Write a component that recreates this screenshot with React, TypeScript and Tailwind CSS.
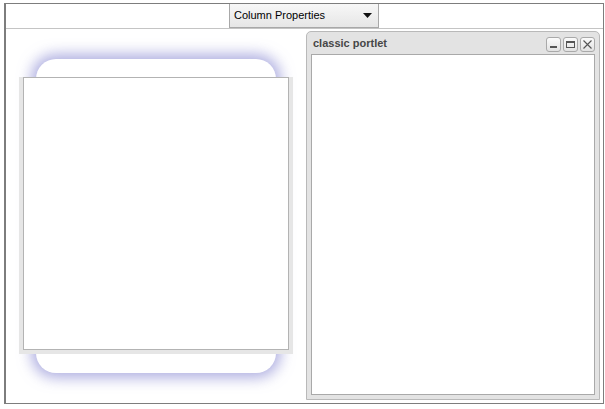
import React from 'react';

function PortletButton({ children }: { children: React.ReactNode }) {
    return (
        <div className="w-[15px] h-[15px] rounded-[3px] border border-[#a9a9a9] bg-gradient-to-b from-[#fbfbfb] to-[#e2e2e2] flex items-center justify-center">
            {children}
        </div>
    );
}

export default function App() {
    return (
        <div className="w-[605px] h-[409px] bg-white pt-[3px] pl-[4px]" style={{ fontFamily: '"Liberation Sans", Arial, sans-serif' }}>
            {/* cadre principal */}
            <div className="w-[600px] h-[401px] border border-l-2 border-[#7d7d7d] flex flex-col">
                {/* barre d'outils */}
                <div className="h-[25px] border-b border-[#c4c4c4] flex justify-center shrink-0">
                    <div className="w-[150px] h-[24px] border border-t-0 border-[#a8a8a8] bg-gradient-to-b from-[#f7f7f7] to-[#e6e6e6] flex items-center justify-between pl-[4px] pr-[6px] mr-[1px]">
                        <span className="text-[11px] text-black">Column Properties</span>
                        <svg width="9" height="5" viewBox="0 0 9 5">
                            <path d="M0 0h9L4.5 5z" fill="#111" />
                        </svg>
                    </div>
                </div>

                {/* colonnes */}
                <div className="flex-1 flex">
                    {/* colonne gauche: zone de dépôt */}
                    <div className="w-[300px] grid place-items-center">
                        <div className="col-start-1 row-start-1 w-[240px] h-[314px] rounded-[20px] bg-white shadow-[0_0_14px_5px_rgba(150,150,215,0.75)]" />
                        <div className="col-start-1 row-start-1 w-[274px] h-[277px] bg-[#e6e6e6] px-[4px] pb-[4px] mb-[1px]">
                            <div className="w-full h-full bg-white border border-[#b3b3b3]" />
                        </div>
                    </div>

                    {/* colonne droite: portlet */}
                    <div className="flex-1 pt-[2px] pb-[3px] pr-[3px]">
                        <div className="h-full rounded-t-[5px] border border-[#b9b9b9] bg-[#e3e3e3] flex flex-col px-[4px] pb-[4px]">
                            <div className="h-[22px] flex items-center justify-between pl-[2px] shrink-0">
                                <span className="text-[11px] font-bold text-[#474747] mt-[1px]">classic portlet</span>
                                <div className="flex gap-[2px] mt-[2px]">
                                    <PortletButton>
                                        <div className="w-[7px] h-[2px] bg-[#555] mt-[5px]" />
                                    </PortletButton>
                                    <PortletButton>
                                        <div className="w-[9px] h-[7px] border border-t-2 border-[#555]" />
                                    </PortletButton>
                                    <PortletButton>
                                        <svg width="9" height="9" viewBox="0 0 9 9">
                                            <path d="M0.5 0.5L8.5 8.5M8.5 0.5L0.5 8.5" stroke="#555" strokeWidth="1.1" />
                                        </svg>
                                    </PortletButton>
                                </div>
                            </div>
                            <div className="flex-1 bg-white border border-[#a9a9a9]" />
                        </div>
                    </div>
                </div>
            </div>
        </div>
    );
}
